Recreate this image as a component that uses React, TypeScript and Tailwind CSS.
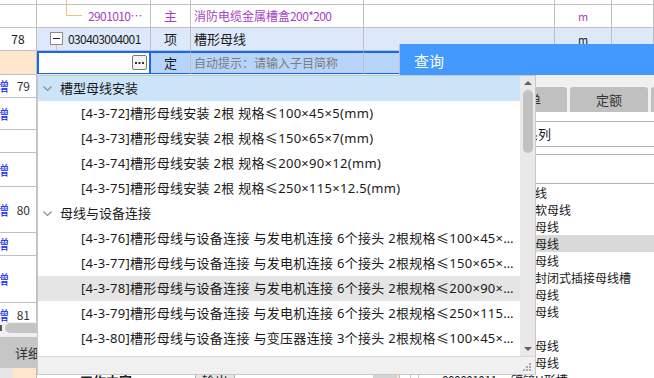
import React from 'react';

const GRID = 'grid grid-cols-[37px_114px_40px_173px_191px_57px_42px]';
const cell = 'h-full border-r border-[#c0c0c0]';
const purple = 'text-[#a63fc6]';
const digits = 'tracking-[-0.6px]';

const groups = [
  {
    title: '槽型母线安装',
    active: true,
    items: [
      '[4-3-72]槽形母线安装 2根 规格≤100×45×5(mm)',
      '[4-3-73]槽形母线安装 2根 规格≤150×65×7(mm)',
      '[4-3-74]槽形母线安装 2根 规格≤200×90×12(mm)',
      '[4-3-75]槽形母线安装 2根 规格≤250×115×12.5(mm)',
    ],
  },
  {
    title: '母线与设备连接',
    active: false,
    items: [
      '[4-3-76]槽形母线与设备连接 与发电机连接 6个接头 2根规格≤100×45×5(mm)',
      '[4-3-77]槽形母线与设备连接 与发电机连接 6个接头 2根规格≤150×65×7(mm)',
      '[4-3-78]槽形母线与设备连接 与发电机连接 6个接头 2根规格≤200×90×12(mm)',
      '[4-3-79]槽形母线与设备连接 与发电机连接 6个接头 2根规格≤250×115×12.5(mm)',
      '[4-3-80]槽形母线与设备连接 与变压器连接 3个接头 2根规格≤100×45×5(mm)',
    ],
  },
];

const hovered = '[4-3-78]';

// left strip of the lower table: [height class, show 增, row number]
const leftRows: [string, boolean, string][] = [
  ['h-[24px]', true, '79'],
  ['h-[32px]', true, ''],
  ['h-[23px]', false, ''],
  ['h-[34px]', true, ''],
  ['h-[46px]', true, '80'],
  ['h-[23px]', true, ''],
  ['h-[47px]', true, ''],
  ['h-[24px]', true, '81'],
];

const queryRows = [
  { code: '', name: '矩形线' },
  { code: '', name: '带形软母线' },
  { code: '', name: '槽形母线' },
  { code: '', name: '带形母线', active: true },
  { code: '', name: '管形母线' },
  { code: '', name: '低压封闭式插接母线槽' },
  { code: '', name: '共箱母线' },
  { code: '', name: '重型母线' },
  { code: '', name: '其他' },
  { code: '', name: '低压母线' },
  { code: '', name: '高压母线' },
  { code: '000001011', name: '镀锌U形槽' },
];

const Chevron = () => (
  <svg width="9" height="5" viewBox="0 0 9 5" className="shrink-0">
    <path d="M0.5 0.5l4 4 4-4" fill="none" stroke="#8c8c8c" strokeWidth="1.1" />
  </svg>
);

const Dropdown = () => (
  <div className="absolute left-[37px] top-[75px] w-[499px] h-[300px] border border-[#c8c8c8] bg-white flex flex-col font-['Noto_Sans','Noto_Sans_CJK_SC',sans-serif] text-[13px] text-[#1a1a1a]">
    <div className="flex h-[280px]">
      <div className="flex-1 min-w-0">
        {groups.map((g) => (
          <div key={g.title}>
            <div className={`h-[25px] flex items-center pl-[5px] gap-[8px] ${g.active ? 'bg-[#cce4f7]' : ''}`}>
              <Chevron />
              <span>{g.title}</span>
            </div>
            {g.items.map((it) => (
              <div
                key={it}
                className={`h-[25px] flex items-center pl-[43px] pr-[3px] tracking-[0.3px] ${it.startsWith(hovered) ? 'bg-[#e5e5e5]' : ''}`}
              >
                <span className="truncate">{it}</span>
              </div>
            ))}
          </div>
        ))}
      </div>
      {/* scrollbar */}
      <div className="w-[15px] bg-[#e9e9e9] flex flex-col items-center">
        <div className="h-[14px] flex items-center justify-center">
          <svg width="8" height="4" viewBox="0 0 8 4"><path d="M0 4L4 0L8 4Z" fill="#606060" /></svg>
        </div>
        <div className="w-[10px] h-[63px] rounded-[5px] bg-[#c1c1c1]" />
        <div className="flex-1" />
        <div className="h-[14px] flex items-center justify-center">
          <svg width="8" height="4" viewBox="0 0 8 4"><path d="M0 0L4 4L8 0Z" fill="#606060" /></svg>
        </div>
      </div>
    </div>
    <div className="flex-1 bg-[#f0f0f0] border-t border-[#d9d9d9] flex items-end justify-end pr-[3px] pb-[2px]">
      <svg width="10" height="10" viewBox="0 0 10 10">
        {[[8, 2], [5, 5], [8, 5], [2, 8], [5, 8], [8, 8]].map(([x, y]) => (
          <rect key={`${x}-${y}`} x={x - 1} y={y - 1} width="2" height="2" fill="#a8a8a8" />
        ))}
      </svg>
    </div>
  </div>
);

const QueryPanel = () => (
  <div className="absolute left-[399px] top-[44px] w-[255px] h-[334px] bg-white border-l border-[#b8c4d4] flex flex-col font-['Noto_Sans_CJK_SC',sans-serif] text-[#1a1a1a]">
    <div className="h-[31px] shrink-0 bg-[#4499ff] text-white text-[15px] flex items-center pl-[14px] pt-[4px]">查询</div>
    <div className="bg-[#f0f0f0] pt-[12px] pl-[89px] flex gap-[3px]">
      {['清单', '定额', '子目'].map((t) => (
        <div key={t} className="w-[78px] h-[25px] shrink-0 rounded-t-[3px] bg-[#c0c0c0] flex items-center justify-center text-[13px] text-[#333]">
          {t}
        </div>
      ))}
    </div>
    <div className="pt-[9px]">
      <div className="h-[26px] border-y border-[#b4b4b4] flex items-center pl-[99px] text-[13px]">清单系列</div>
      <div className="h-[7px]" />
      <div className="h-[30px] border-y border-[#b4b4b4]" />
    </div>
    <div className="text-[12px]">
      {queryRows.map((r, i) => (
        <div key={i} className={`h-[17px] flex items-center ${r.active ? 'bg-[#d9d9d9]' : ''}`}>
          <div className="w-[11px] h-full border-r border-[#c8c8c8]" />
          <div className="w-[8px] h-full border-r border-[#c8c8c8]" />
          <div className={`w-[92px] pl-[23px] whitespace-nowrap ${digits}`}>{r.code}</div>
          <div className="whitespace-nowrap">{r.name}</div>
        </div>
      ))}
    </div>
  </div>
);

export default function App() {
  return (
    <div className="relative w-[654px] h-[378px] overflow-hidden bg-white text-[12px] text-[#1a1a1a] font-['Noto_Sans_CJK_SC',sans-serif]">
      <div className="flex flex-col h-full">
        {/* grid: clipped row above */}
        <div className={`${GRID} h-[5px] shrink-0 border-b border-[#c0c0c0]`}>
          <div className={cell} />
          <div className={cell}>
            <div className="ml-[29px] h-full border-l border-[#f4bf72]" />
          </div>
          <div className={cell} />
          <div className={cell} />
          <div className={cell} />
          <div className={cell} />
          <div className={cell} />
        </div>

        {/* material row */}
        <div className={`${GRID} h-[23px] shrink-0 border-b border-[#c0c0c0]`}>
          <div className={cell} />
          <div className={`${cell} flex items-center`}>
            <svg width="16" height="22" viewBox="0 0 16 22" className="ml-[29px] shrink-0">
              <path d="M0.5 0V10.5H16" fill="none" stroke="#f4bf72" strokeWidth="1" />
            </svg>
            <span className={`ml-[6px] whitespace-nowrap ${purple}`}>
              <span className={digits}>2901010</span>…
            </span>
          </div>
          <div className={`${cell} flex items-center justify-center ${purple} text-[13px]`}>主</div>
          <div className={`${cell} flex items-center pl-[3px] ${purple} whitespace-nowrap`}>
            消防电缆金属槽盒<span className={digits}>200*200</span>
          </div>
          <div className={cell} />
          <div className={`${cell} flex items-center justify-center ${purple} text-[11px]`}>m</div>
          <div className={cell} />
        </div>

        {/* item row 78 */}
        <div className={`${GRID} h-[23px] shrink-0 border-b border-[#c0c0c0] bg-[#dde9fb]`}>
          <div className={`${cell} bg-white flex items-center justify-center`}>78</div>
          <div className={`${cell} flex items-center`}>
            <svg width="13" height="22" viewBox="0 0 13 22" className="ml-[13px] shrink-0">
              <rect x="0.5" y="4.5" width="12" height="12" fill="#fff" stroke="#8a8a8a" />
              <path d="M3 10.5H10" stroke="#222" strokeWidth="1" />
              <path d="M6.5 17V22" stroke="#f4bf72" strokeWidth="1" />
            </svg>
            <span className={`ml-[5px] ${digits}`}>030403004001</span>
          </div>
          <div className={`${cell} flex items-center justify-center text-[13px]`}>项</div>
          <div className={`${cell} flex items-center pl-[3px] text-[13px]`}>槽形母线</div>
          <div className={cell} />
          <div className={`${cell} flex items-center justify-center text-[11px]`}>m</div>
          <div className={cell} />
        </div>

        {/* editing row */}
        <div className={`${GRID} h-[23px] shrink-0`}>
          <div className={`${cell} bg-[#fde6cb] border-b`} />
          <div className="h-full border-2 border-[#1767f5] bg-white flex items-center justify-end pr-[2px]">
            <div className="w-[15px] h-[15px] rounded-[2px] border border-[#7a7a7a] bg-[#f4f4f4] flex items-center justify-center">
              <svg width="9" height="2" viewBox="0 0 9 2">
                <rect x="0" y="0" width="2" height="2" fill="#333" />
                <rect x="3.5" y="0" width="2" height="2" fill="#333" />
                <rect x="7" y="0" width="2" height="2" fill="#333" />
              </svg>
            </div>
          </div>
          <div className="h-full border-y-2 border-y-[#1767f5] border-r border-r-[#c0c0c0] bg-[#b7d5fb] flex items-center justify-center text-[13px]">定</div>
          <div className="h-full border-y-2 border-y-[#1767f5] border-r border-r-[#c0c0c0] bg-[#b7d5fb] flex items-center pl-[3px] text-[#7b7b7b] whitespace-nowrap">
            自动提示：请输入子目简称
          </div>
          <div className="h-full border-y-2 border-y-[#1767f5] bg-[#b7d5fb]" />
          <div className="h-full border-y-2 border-y-[#1767f5] bg-[#b7d5fb]" />
          <div className="h-full border-y-2 border-y-[#1767f5] bg-[#b7d5fb]" />
        </div>

        {/* lower table area */}
        <div className="h-[248px] shrink-0 flex overflow-hidden">
          <div className="w-[37px] shrink-0 border-r border-[#c0c0c0] overflow-hidden">
            {leftRows.map(([h, add, num], i) => (
              <div key={i} className={`${h} shrink-0 flex items-center border-b border-[#c0c0c0]`}>
                {add && <span className="-ml-[4px] text-[13px] text-[#0b1ef0]">增</span>}
                {num && <span className="ml-auto mr-[6px] text-[#333]">{num}</span>}
              </div>
            ))}
          </div>
          <div className="flex-1">
            <div className="h-[23px] bg-[#dde9fb] border-b border-[#c0c0c0]" />
          </div>
        </div>

        {/* horizontal scrollbar */}
        <div className="h-[12px] shrink-0 bg-[#f0f0f0] flex items-center">
          <div className="w-[2px] h-[6px] bg-[#555]" />
          <div className="ml-[3px] w-[300px] h-[10px] rounded-full bg-[#c4c4c4]" />
        </div>
        <div className="h-[3px] shrink-0 bg-[#f0f0f0]" />

        {/* bottom tabs */}
        <div className="h-[31px] shrink-0 bg-[#c6c6c6] flex items-center pl-[15px] text-[13px] text-[#333]">详细</div>

        {/* detail row */}
        <div className="h-[26px] shrink-0 flex items-center text-[13px]">
          <div className="w-[13px] h-full bg-[#e6e6e6]" />
          <div className="w-[24px] h-full bg-[#fde6cb] border-r border-[#c0c0c0]" />
          <div className="w-[158px] pl-[43px] font-bold">工作内容</div>
          <div className="w-[40px] h-full bg-[#e6e6e6] border border-[#b0b0b0] flex items-center justify-center">输出</div>
          <div className="w-[138px]" />
          <div className="w-[24px] h-full bg-[#d4d4d4]" />
          <div className="w-[3px] h-full bg-[#fde6cb]" />
        </div>
      </div>

      <QueryPanel />
      <Dropdown />
    </div>
  );
}
